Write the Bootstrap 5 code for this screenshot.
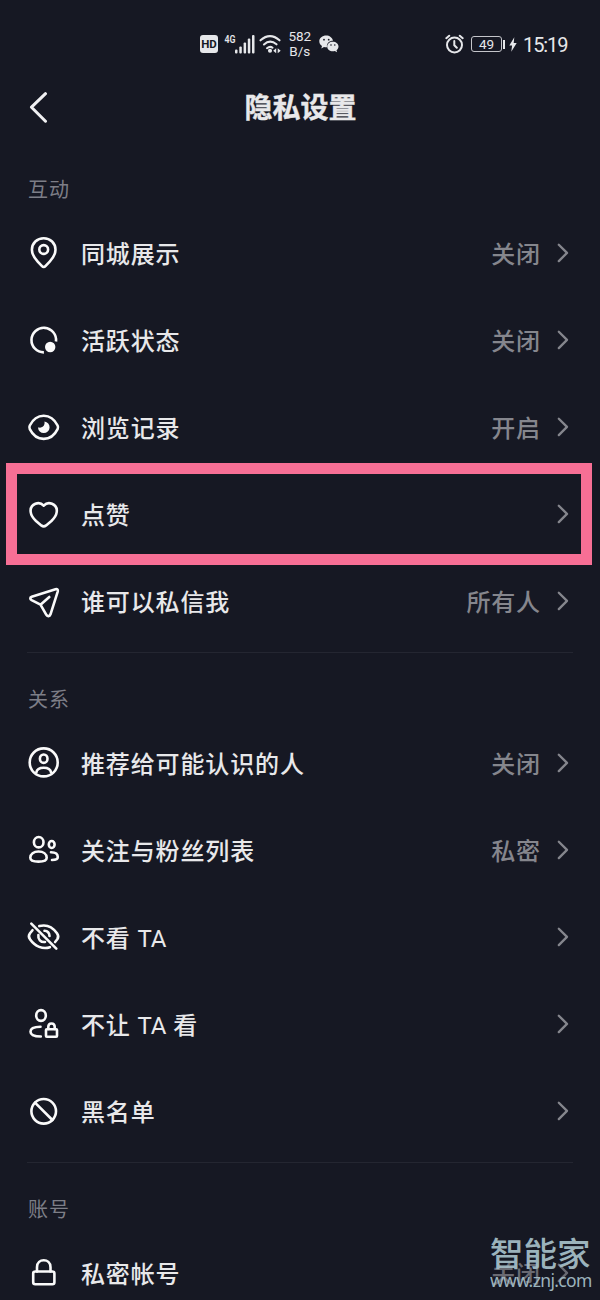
<!DOCTYPE html>
<html lang="zh-CN">
<head>
<meta charset="utf-8">
<meta name="viewport" content="width=device-width, initial-scale=1">
<title>隐私设置</title>
<link href="https://cdn.jsdelivr.net/npm/bootstrap@5.3.0/dist/css/bootstrap.min.css" rel="stylesheet">
<style>
  body { background: #161823; color: #e8e8ea; font-family: Roboto, "Noto Sans CJK SC", sans-serif; height: 1300px; overflow: hidden; }
  .screen { width: 600px; height: 1300px; overflow: hidden; }
  svg { display: block; flex: none; }
  .ico { width: 36px; height: 37px; fill: none; stroke: #fafafa; stroke-width: 2.6; stroke-linecap: round; stroke-linejoin: round; }
  .status { height: 88px; padding: 0 33px 0 200px; color: #e6e7ea; }
  .hd { width: 18px; height: 18px; border-radius: 3px; background: #e6e7ea; color: #161823; font-size: 11.5px; font-weight: 700; line-height: 18px; }
  .net { font-size: 11px; line-height: 10px; font-weight: 600; margin: 0 -2px 9px 5px; transform: scaleX(.8); }
  .rate { font-size: 13.5px; line-height: 15px; width: 24px; margin-left: 6px; }
  .batt { width: 31px; height: 16px; border: 1px solid #c4c5ca; border-radius: 3px; font-size: 13.5px; line-height: 15px; margin-left: 7px; }
  .tip { width: 2px; height: 9px; background: #e6e7ea; margin-left: 1px; }
  .clock { width: 44px; font-size: 20px; letter-spacing: -1.1px; line-height: 24px; margin-left: 6px; padding-top: 1px; }
  .topbar { height: 40px; margin-bottom: 15px; }
  .topbar h1 { font-size: 28px; font-weight: 700; line-height: 40px; padding: 1px 0 0 1px; -webkit-text-stroke: .4px #e8e8ea; }
  .back { left: 28px; top: 4px; }
  .sect-title { height: 66px; padding: 32px 28px 0; font-size: 20px; line-height: 30px; letter-spacing: 1px; color: #7d7e87; }
  .setting { height: 87px; padding: 0 31px 0 25px; }
  .setting .txt { font-size: 24px; letter-spacing: .87px; font-weight: 500; line-height: 36px; margin-left: 20px; padding-top: 4px; }
  .setting .lat { font-weight: 400; letter-spacing: -.1px; }
  .setting .val { font-size: 24px; letter-spacing: .87px; line-height: 36px; font-weight: 500; color: #85868d; margin-right: 16px; padding-top: 4px; }
  .chev { width: 12px; height: 20px; fill: none; stroke: #85868d; stroke-width: 2.3; stroke-linecap: round; stroke-linejoin: round; }
  .rule { height: 1px; margin: 8px 27px 0; background: #242631; }
  .picked::after { content: ""; position: absolute; left: 6px; right: 8px; top: -7px; height: 102px; border: 11px solid #f76f95; }
  .last .val, .last .chev { opacity: .75; }
  .wm { left: 490px; top: 1238px; color: #a3bcc5; opacity: .95; }
  .wm-name { font-size: 33.5px; line-height: 33px; font-weight: 500; }
  .wm-url { font: 17.5px/18px "Noto Sans", sans-serif; letter-spacing: -.65px; }
</style>
</head>
<body>
<main class="screen position-relative">
  <div class="status d-flex align-items-center">
    <span class="hd text-center">HD</span>
    <span class="net">4G</span>
    <svg width="20" height="20" viewBox="0 0 20 20" fill="#e6e7ea"><rect y="15.5" width="2.5" height="4" rx="1"/><rect x="4.3" y="12.5" width="2.5" height="7" rx="1"/><rect x="8.6" y="8.5" width="2.5" height="11" rx="1"/><rect x="12.8" y="4.5" width="2.5" height="15" rx="1"/><rect x="17" y="1" width="2.5" height="18.5" rx="1"/></svg>
    <svg class="ms-1" width="23" height="20" viewBox="0 0 23 20" fill="none" stroke="#e6e7ea" stroke-width="2.1" stroke-linecap="round"><path d="M1.500 6.300Q11-2 20.500 6.300M5 10.500Q11 5 17.500 10.300M8 14.200Q11 11.700 13.500 13.700"/><circle cx="11" cy="16.800" r="1" fill="#e6e7ea"/><path d="M17.200 14.200v5l-3-2.500zM18.700 14.200v5l3-2.500z" fill="#e6e7ea" stroke="none"/></svg>
    <span class="rate text-center">582<br>B/s</span>
    <svg width="20" height="18" viewBox="0 0 20 18" fill="#e6e7ea" style="margin-left:7px"><path d="M7.200.5C3.300.5.3 3 .3 6.300c0 2 1 3.500 2.700 4.600L2.300 13.500 5 12c1 .3 2 .4 3 .3-.7-4 2.300-6.500 6-6.500C13.300 2.500 10.500.5 7.200.5z"/><path d="M13.800 6.700c-3.200 0-5.600 2.100-5.600 4.800s2.500 4.800 5.600 4.800c.7 0 1.400-.1 2-.3l2.300 1.300-.6-2c1.300-1 2-2.300 2-3.800 0-2.700-2.500-4.800-5.700-4.800z"/><g fill="#161823"><circle cx="5" cy="4.700" r=".9"/><circle cx="9.700" cy="4.700" r=".9"/><circle cx="12" cy="10" r=".8"/><circle cx="15.800" cy="10" r=".8"/></g></svg>
    <svg class="ms-auto" width="19" height="20" viewBox="0 0 19 20" fill="none" stroke="#e6e7ea" stroke-width="2" stroke-linecap="round" stroke-linejoin="round"><circle cx="9.500" cy="11" r="7.500"/><path d="M9.300 7v4.300l2.500 2.500M1.300 4.200 4.200 1.700M17.700 4.200 14.800 1.700"/></svg>
    <span class="batt text-center">49</span><span class="tip"></span>
    <svg class="ms-1" width="8" height="15" viewBox="0 0 8 15" fill="#e6e7ea"><path d="M5.300.3.300 8.500h2.800L2.300 14.700 7.700 6H4.700z"/></svg>
    <span class="clock">15:19</span>
  </div>

  <header class="topbar position-relative text-center">
    <svg class="back position-absolute" width="22" height="32" viewBox="0 0 22 32" fill="none" stroke="#f0f0f2" stroke-width="3" stroke-linecap="round" stroke-linejoin="round"><path d="M17.500 1.700 3.500 15.200l14 14"/></svg>
    <h1 class="m-0">隐私设置</h1>
  </header>

  <section>
    <div class="sect-title">互动</div>
    <div class="setting d-flex align-items-center">
      <svg class="ico" viewBox="0 0 36 37"><path d="M18.700 4.200c-6.600 0-11.800 5-11.800 11.600 0 4.500 2.500 8.200 5.800 11.800l4.300 4.600c1 1.100 2.400 1.100 3.400 0l4.300-4.600c3.300-3.600 5.800-7.300 5.800-11.800 0-6.600-5.200-11.600-11.800-11.600z"/><circle cx="18.700" cy="15.500" r="4.400"/></svg>
      <span class="txt">同城展示</span><span class="val ms-auto">关闭</span>
      <svg class="chev" viewBox="0 0 12 20"><path d="m1.800 1.700 8.200 8.200-8.200 8.200"/></svg>
    </div>
    <div class="setting d-flex align-items-center">
      <svg class="ico" viewBox="0 0 36 37"><path d="M31 20.500A12.300 12.300 0 1 0 18.900 31.400" stroke-linecap="butt"/><circle cx="25.200" cy="26" r="5.200" fill="#fafafa" stroke="none"/></svg>
      <span class="txt">活跃状态</span><span class="val ms-auto">关闭</span>
      <svg class="chev" viewBox="0 0 12 20"><path d="m1.800 1.700 8.200 8.200-8.200 8.200"/></svg>
    </div>
    <div class="setting d-flex align-items-center">
      <svg class="ico" viewBox="0 0 36 37"><path d="M4.800 17.500C7.800 11.500 13 7.700 18.700 7.700s10.900 3.800 13.900 9.800c.6 1.200.6 2.400 0 3.600-3 6-8.200 9.800-13.900 9.800S7.800 27.100 4.800 21.100c-.6-1.200-.6-2.400 0-3.600z"/><path d="M19.500 13.500a5.800 5.800 0 1 1-6.500 6c2.300.3 3.500.3 4.900-.9 1.300-1.200 1.900-2.600 1.600-5.100z" fill="#fafafa" stroke="none"/></svg>
      <span class="txt">浏览记录</span><span class="val ms-auto">开启</span>
      <svg class="chev" viewBox="0 0 12 20"><path d="m1.800 1.700 8.200 8.200-8.200 8.200"/></svg>
    </div>
    <div class="setting picked position-relative d-flex align-items-center">
      <svg class="ico" viewBox="0 0 36 37"><path d="M18.700 10.700c-2.300-2.500-5.300-3.200-8.300-1.900-3.400 1.500-5.200 4.800-4.700 8.300.4 3.300 2.300 6 5.300 8.900l5.300 4.400c1.700 1.300 3.100 1.300 4.800 0l5.300-4.400c3-2.900 4.900-5.600 5.300-8.900.5-3.500-1.300-6.800-4.700-8.300-3-1.300-6-.6-8.300 1.900z"/></svg>
      <span class="txt">点赞</span>
      <svg class="chev ms-auto" viewBox="0 0 12 20"><path d="m1.800 1.700 8.200 8.200-8.200 8.200"/></svg>
    </div>
    <div class="setting d-flex align-items-center">
      <svg class="ico" viewBox="0 0 36 37"><path d="M6.700 14.700 30.500 7.200c1.700-.5 2.600.4 2.300 2.100l-7.300 23c-.8 2.300-3.200 2.500-4.300.4L15.500 22.700 6.600 18.200c-1.800-1-1.700-2.900.1-3.500zM15.500 22.700l8.800-7.700"/></svg>
      <span class="txt">谁可以私信我</span><span class="val ms-auto">所有人</span>
      <svg class="chev" viewBox="0 0 12 20"><path d="m1.800 1.700 8.200 8.200-8.200 8.200"/></svg>
    </div>
    <div class="rule"></div>
  </section>

  <section>
    <div class="sect-title">关系</div>
    <div class="setting d-flex align-items-center">
      <svg class="ico" viewBox="0 0 36 37"><circle cx="18.700" cy="18.400" r="14"/><ellipse cx="18.700" cy="14.700" rx="3.800" ry="4.200"/><path d="M11.300 28.500c.5-3 3.500-4.800 7.400-4.800s6.900 1.800 7.400 4.800"/></svg>
      <span class="txt">推荐给可能认识的人</span><span class="val ms-auto">关闭</span>
      <svg class="chev" viewBox="0 0 12 20"><path d="m1.800 1.700 8.200 8.200-8.200 8.200"/></svg>
    </div>
    <div class="setting d-flex align-items-center">
      <svg class="ico" viewBox="0 0 36 37"><ellipse cx="13.700" cy="11.200" rx="4.800" ry="5.200"/><path d="M13.500 20.500c-4.800 0-8.200 2.500-8.200 6.200 0 3.300 3 3.900 8.200 3.900s8.200-.6 8.200-3.900c0-3.700-3.400-6.200-8.200-6.200z"/><ellipse cx="26.700" cy="13.500" rx="2.900" ry="3.500"/><path d="M26 21.300c4 0 6.800 1.700 6.800 4.700 0 2.200-1.800 3-5.800 3"/></svg>
      <span class="txt">关注与粉丝列表</span><span class="val ms-auto">私密</span>
      <svg class="chev" viewBox="0 0 12 20"><path d="m1.800 1.700 8.200 8.200-8.200 8.200"/></svg>
    </div>
    <div class="setting d-flex align-items-center">
      <svg class="ico" viewBox="0 0 36 37"><path d="M6.300 5.700l25 25M14.300 8.100c6.300-1.700 13 .6 17.700 7.200 1.700 2.300 1.800 3.800.3 6l-2.200 2.700M7.500 12.200l-2.500 3.100c-1.700 2.300-1.700 3.800 0 6 5 7.200 12.800 10.300 19.900 7.900M19.500 12.800c2.700.2 4.800 2.300 5 5.200M13.400 17c-.7 4.200 2.300 7.500 6.600 7"/></svg>
      <span class="txt">不看 <span class="lat">TA</span></span>
      <svg class="chev ms-auto" viewBox="0 0 12 20"><path d="m1.800 1.700 8.200 8.200-8.200 8.200"/></svg>
    </div>
    <div class="setting d-flex align-items-center">
      <svg class="ico" viewBox="0 0 36 37"><ellipse cx="16" cy="10.500" rx="4.800" ry="5.400"/><path d="M15.500 21.800c-6 0-10 1.900-10 5 0 3.500 4.500 4.700 10.300 4.700"/><rect x="21" y="24.200" width="11" height="7.500" rx=".8"/><path d="M23.300 24v-2.200c0-4.500 6.400-4.500 6.400 0V24"/></svg>
      <span class="txt">不让 <span class="lat">TA</span> 看</span>
      <svg class="chev ms-auto" viewBox="0 0 12 20"><path d="m1.800 1.700 8.200 8.200-8.200 8.200"/></svg>
    </div>
    <div class="setting d-flex align-items-center">
      <svg class="ico" viewBox="0 0 36 37"><circle cx="18.700" cy="19.300" r="12.300"/><path d="m10 10.600 17.400 17.400"/></svg>
      <span class="txt">黑名单</span>
      <svg class="chev ms-auto" viewBox="0 0 12 20"><path d="m1.800 1.700 8.200 8.200-8.200 8.200"/></svg>
    </div>
    <div class="rule"></div>
  </section>

  <section>
    <div class="sect-title">账号</div>
    <div class="setting last d-flex align-items-center">
      <svg class="ico" viewBox="0 0 36 37"><rect x="8.200" y="17.500" width="21.200" height="12.700" rx="2"/><path d="M12 17.500v-4.300c0-9.200 13.500-9.200 13.500 0v4.300"/></svg>
      <span class="txt">私密帐号</span><span class="val ms-auto">关闭</span>
      <svg class="chev" viewBox="0 0 12 20"><path d="m1.800 1.700 8.200 8.200-8.200 8.200"/></svg>
    </div>
  </section>

  <div class="wm position-absolute">
    <div class="wm-name">智能家</div>
    <div class="wm-url">www.znj.com</div>
  </div>
</main>
<script src="https://cdn.jsdelivr.net/npm/bootstrap@5.3.0/dist/js/bootstrap.bundle.min.js"></script>
</body>
</html>
